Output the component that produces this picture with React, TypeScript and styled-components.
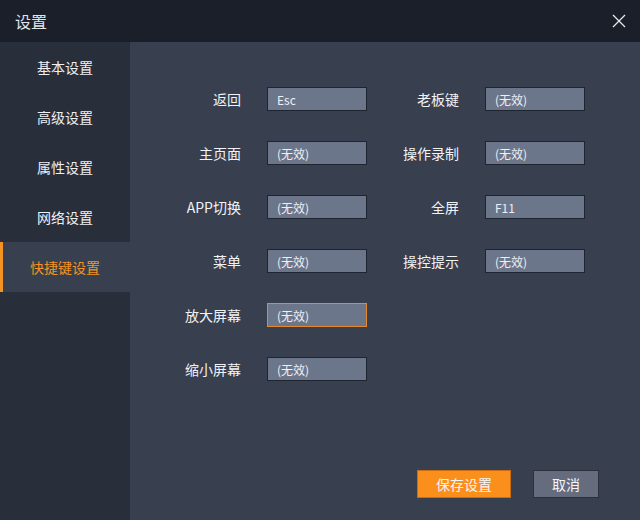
import React, { useState } from 'react';
import styled, { createGlobalStyle } from 'styled-components';

const GlobalStyle = createGlobalStyle`
  html, body { margin: 0; padding: 0; background: #383f4f; }
  body { font-family: "Noto Sans CJK SC", "Noto Sans", sans-serif; }
  * { box-sizing: border-box; }
`;

const Window = styled.div`
  width: 640px;
  height: 520px;
  display: flex;
  flex-direction: column;
  background: #383f4f;
  overflow: hidden;
`;

const TitleBar = styled.div`
  height: 42px;
  flex: none;
  display: flex;
  align-items: center;
  justify-content: space-between;
  padding: 0 13px 0 15px;
  background: #1b1f29;
  color: #e2e4e8;
  font-size: 16px;
`;

const CloseButton = styled.button`
  width: 16px;
  height: 16px;
  padding: 0;
  border: none;
  background: transparent;
  cursor: pointer;
  display: flex;
  align-items: center;
  justify-content: center;
`;

const Body = styled.div`
  flex: 1;
  display: flex;
  min-height: 0;
`;

const Sidebar = styled.nav`
  width: 130px;
  flex: none;
  background: #292e3b;
  display: flex;
  flex-direction: column;
`;

const NavItem = styled.div<{ $active?: boolean }>`
  height: 50px;
  display: flex;
  align-items: center;
  justify-content: center;
  font-size: 14px;
  color: ${p => (p.$active ? '#f39324' : '#eef0f3')};
  background: ${p => (p.$active ? '#383f4f' : 'transparent')};
  box-shadow: ${p => (p.$active ? 'inset 3px 0 0 #f39324' : 'none')};
  cursor: pointer;
`;

const Content = styled.section`
  flex: 1;
  display: flex;
  flex-direction: column;
  justify-content: space-between;
  padding: 45px 41px 22px 31px;
`;

const FormGrid = styled.div`
  display: grid;
  grid-template-columns: 80px 100px 66px 100px;
  grid-auto-rows: 24px;
  column-gap: 26px;
  row-gap: 30px;
`;

const Label = styled.label`
  display: flex;
  align-items: center;
  justify-content: flex-end;
  font-size: 14px;
  color: #f1f2f4;
  white-space: nowrap;
`;

const KeyBox = styled.div<{ $focused?: boolean }>`
  height: 24px;
  display: flex;
  align-items: center;
  padding: 0 9px;
  background: #6c768b;
  border: 1px solid ${p => (p.$focused ? '#e48a2e' : '#1f2431')};
  color: #eef0f4;
  font-size: 12px;
`;

const Empty = styled.div``;

const Footer = styled.div`
  display: flex;
  justify-content: flex-end;
  gap: 22px;
`;

const Button = styled.button<{ $primary?: boolean }>`
  height: 28px;
  width: ${p => (p.$primary ? '94px' : '66px')};
  font-family: inherit;
  font-size: 14px;
  color: #f4f5f7;
  background: ${p => (p.$primary ? '#fb8f1c' : '#656c7e')};
  border: 1px solid ${p => (p.$primary ? '#c96d10' : '#2b303c')};
  cursor: pointer;
`;

const navItems = ['基本设置', '高级设置', '属性设置', '网络设置', '快捷键设置'];

type Cell = { label: string; value: string; focused?: boolean } | null;

const rows: [Cell, Cell][] = [
  [{ label: '返回', value: 'Esc' }, { label: '老板键', value: '(无效)' }],
  [{ label: '主页面', value: '(无效)' }, { label: '操作录制', value: '(无效)' }],
  [{ label: 'APP切换', value: '(无效)' }, { label: '全屏', value: 'F11' }],
  [{ label: '菜单', value: '(无效)' }, { label: '操控提示', value: '(无效)' }],
  [{ label: '放大屏幕', value: '(无效)', focused: true }, null],
  [{ label: '缩小屏幕', value: '(无效)' }, null],
];

function CloseIcon() {
  return (
    <svg width="14" height="14" viewBox="0 0 14 14">
      <path d="M1 1 L13 13 M13 1 L1 13" stroke="#e6e8ec" strokeWidth="1.3" fill="none" />
    </svg>
  );
}

export default function App() {
  const [active, setActive] = useState(4);

  return (
    <>
      <GlobalStyle />
      <Window>
        <TitleBar>
          <span>设置</span>
          <CloseButton aria-label="关闭">
            <CloseIcon />
          </CloseButton>
        </TitleBar>
        <Body>
          <Sidebar>
            {navItems.map((name, i) => (
              <NavItem key={name} $active={i === active} onClick={() => setActive(i)}>
                {name}
              </NavItem>
            ))}
          </Sidebar>
          <Content>
            <FormGrid>
              {rows.map((row, r) =>
                row.map((cell, c) =>
                  cell ? (
                    <React.Fragment key={`${r}-${c}`}>
                      <Label>{cell.label}</Label>
                      <KeyBox $focused={cell.focused}>{cell.value}</KeyBox>
                    </React.Fragment>
                  ) : (
                    <React.Fragment key={`${r}-${c}`}>
                      <Empty />
                      <Empty />
                    </React.Fragment>
                  )
                )
              )}
            </FormGrid>
            <Footer>
              <Button $primary>保存设置</Button>
              <Button>取消</Button>
            </Footer>
          </Content>
        </Body>
      </Window>
    </>
  );
}
